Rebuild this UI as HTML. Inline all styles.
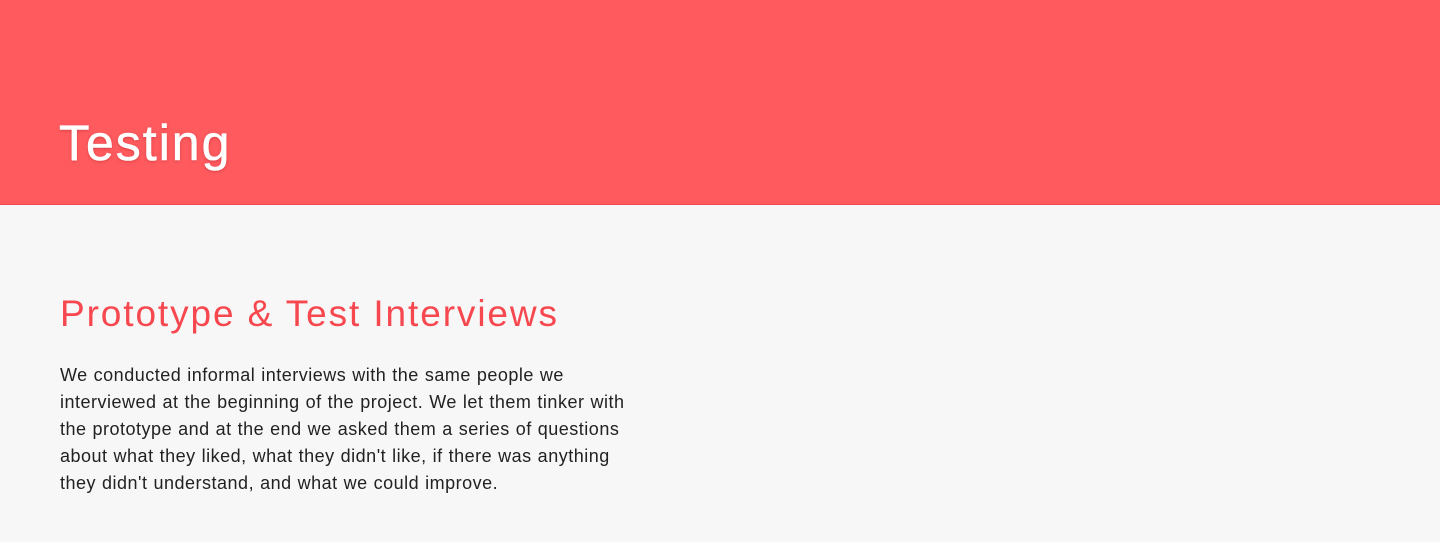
<!DOCTYPE html>
<html><head><meta charset="utf-8"><style>
html,body{margin:0;padding:0;width:1440px;height:542px;overflow:hidden;background:#f7f7f7;font-family:"Liberation Sans",sans-serif;}
.hd{position:absolute;left:0;top:0;width:1440px;height:204px;background:#ff5b5f;border-bottom:1px solid #f04a52;}
.hd h1{position:absolute;left:59px;top:113px;margin:0;font-size:50px;font-weight:normal;color:#fff;letter-spacing:2px;text-shadow:0 1px 3px rgba(120,0,0,0.35);line-height:60px;-webkit-text-stroke:0.6px #fff;}
h2{position:absolute;left:60px;top:291px;margin:0;font-size:37px;font-weight:normal;color:#f7474f;line-height:46px;letter-spacing:1.9px;}
p{position:absolute;left:60px;top:362px;margin:0;font-size:18px;line-height:27px;color:#222;white-space:nowrap;letter-spacing:0.5px;word-spacing:0.5px;}
</style></head><body>
<div class="hd"><h1>Testing</h1></div>
<h2>Prototype &amp; Test Interviews</h2>
<p>We conducted informal interviews with the same people we<br>interviewed at the beginning of the project. We let them tinker with<br>the prototype and at the end we asked them a series of questions<br>about what they liked, what they didn't like, if there was anything<br>they didn't understand, and what we could improve.</p>
</body></html>
